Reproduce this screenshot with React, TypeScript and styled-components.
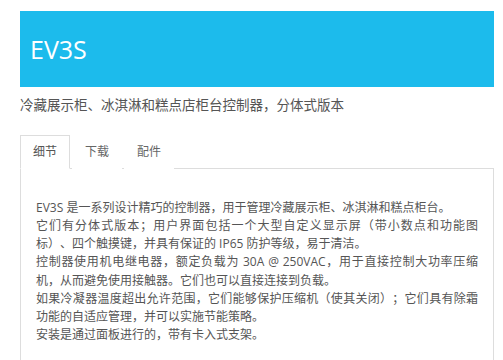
import React, { useState } from "react";
import styled, { createGlobalStyle } from "styled-components";

const Global = createGlobalStyle`
  html, body { margin: 0; padding: 0; background: #fff; }
  body {
    font-family: "Open Sans", "Noto Sans CJK SC", sans-serif;
    color: #555;
    text-spacing-trim: space-all;
  }
`;

const Page = styled.div`
  width: 474px;
  margin: 0 0 0 20px;
  padding-top: 11px;
`;

const Banner = styled.header`
  height: 76px;
  background: #1cbbec;
  display: flex;
  align-items: center;
  padding-left: 10px;
`;

const Title = styled.h1`
  margin: 0;
  font-size: 25px;
  font-weight: 400;
  color: #fff;
  line-height: 1;
`;

const Subtitle = styled.p`
  margin: 8px 0 0;
  font-size: 13.5px;
  line-height: 20px;
  color: #555;
`;

const TabBar = styled.div`
  display: flex;
  margin-top: 20px;
  border-bottom: 1px solid #ddd;
`;

const Tab = styled.button<{ $active: boolean }>`
  appearance: none;
  font: inherit;
  font-size: 12px;
  line-height: 18px;
  height: 34px;
  padding: 0 12px;
  margin: 0 2px -1px 0;
  background: #fff;
  color: ${(p) => (p.$active ? "#555" : "#666")};
  border: 1px solid ${(p) => (p.$active ? "#ddd" : "transparent")};
  border-bottom-color: ${(p) => (p.$active ? "#fff" : "transparent")};
  cursor: pointer;
`;

const Panel = styled.section`
  border: 1px solid #ddd;
  border-top: none;
  padding: 30px 15px 30px;
  font-size: 12px;
  line-height: 18.15px;
  color: #555;
`;

const Line = styled.span<{ $fill?: boolean }>`
  display: block;
  white-space: nowrap;
  text-align: justify;
  text-align-last: ${(p) => (p.$fill ? "justify" : "start")};
`;

const lines: { text: string; fill?: boolean }[] = [
  { text: "EV3S 是一系列设计精巧的控制器，用于管理冷藏展示柜、冰淇淋和糕点柜台。" },
  { text: "它们有分体式版本；用户界面包括一个大型自定义显示屏（带小数点和功能图", fill: true },
  { text: "标）、四个触摸键，并具有保证的 IP65 防护等级，易于清洁。" },
  { text: "控制器使用机电继电器，额定负载为 30A @ 250VAC，用于直接控制大功率压缩", fill: true },
  { text: "机，从而避免使用接触器。它们也可以直接连接到负载。" },
  { text: "如果冷凝器温度超出允许范围，它们能够保护压缩机（使其关闭）；它们具有除霜", fill: true },
  { text: "功能的自适应管理，并可以实施节能策略。" },
  { text: "安装是通过面板进行的，带有卡入式支架。" },
];

const tabs = ["细节", "下载", "配件"];

export default function App() {
  const [active, setActive] = useState(0);
  return (
    <>
      <Global />
      <Page>
        <Banner>
          <Title>EV3S</Title>
        </Banner>
        <Subtitle>冷藏展示柜、冰淇淋和糕点店柜台控制器，分体式版本</Subtitle>
        <TabBar>
          {tabs.map((t, i) => (
            <Tab key={t} $active={i === active} onClick={() => setActive(i)}>
              {t}
            </Tab>
          ))}
        </TabBar>
        <Panel>
          {lines.map((l, i) => (
            <Line key={i} $fill={l.fill}>
              {l.text}
            </Line>
          ))}
        </Panel>
      </Page>
    </>
  );
}
